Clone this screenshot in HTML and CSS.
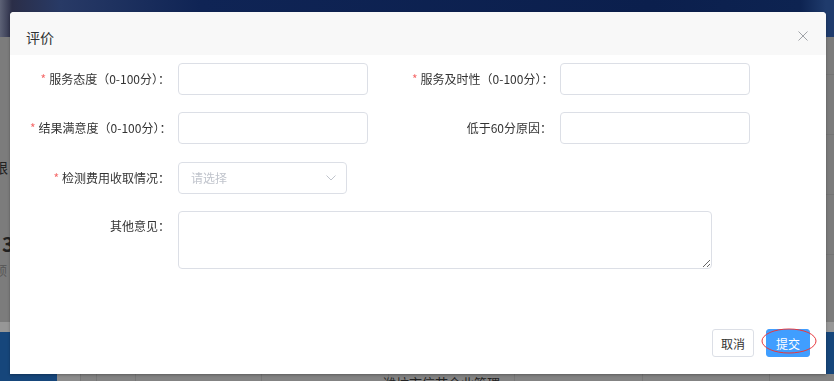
FILE: index.html
```html
<!DOCTYPE html>
<html lang="zh-CN">
<head>
    <meta charset="UTF-8">
    <meta name="viewport" content="width=device-width, initial-scale=1.0">
    <title>评价</title>
    <link rel="stylesheet" href="styles.css">
</head>
<body>
    <div class="page">
        <div class="banner"></div>
        <div class="main">
            <div class="side">
                <div class="side-label">限</div>
                <div class="side-num">3</div>
                <div class="side-hint">预</div>
            </div>
            <div class="main-rows">
                <div class="main-row"></div>
                <div class="main-row"></div>
                <div class="main-row"></div>
                <div class="main-row"></div>
            </div>
        </div>
        <div class="band"></div>
        <div class="bottom">
            <div class="bottom-nav"></div>
            <div class="table-row">
                <div class="cell c1"></div>
                <div class="cell c2"></div>
                <div class="cell c3"></div>
                <div class="cell c4"></div>
                <div class="cell c5"></div>
                <div class="cell c6">潍坊市信节企业管理</div>
                <div class="cell c7"></div>
                <div class="cell c8"></div>
                <div class="cell c9"></div>
            </div>
        </div>
    </div>

    <div class="dialog">
        <div class="dialog-header">
            <span class="dialog-title">评价</span>
            <svg class="dialog-close" width="10" height="10" viewBox="0 0 10 10">
                <path d="M0.5 0.5 L9.5 9.5 M9.5 0.5 L0.5 9.5" stroke="#a0a3a8" stroke-width="1" fill="none"/>
            </svg>
        </div>

        <form class="dialog-body" id="rateForm">
            <div class="form-item">
                <label class="form-label"><span class="req">*</span>服务态度（0-100分）：</label>
                <input class="form-input" type="text" name="attitude">
            </div>
            <div class="form-item">
                <label class="form-label"><span class="req">*</span>服务及时性（0-100分）：</label>
                <input class="form-input" type="text" name="timeliness">
            </div>

            <div class="form-item">
                <label class="form-label"><span class="req">*</span>结果满意度（0-100分）：</label>
                <input class="form-input" type="text" name="satisfaction">
            </div>
            <div class="form-item">
                <label class="form-label">低于60分原因：</label>
                <input class="form-input" type="text" name="reason">
            </div>

            <div class="form-item">
                <label class="form-label"><span class="req">*</span>检测费用收取情况：</label>
                <div class="form-select">
                    <span class="placeholder">请选择</span>
                    <svg width="10" height="6" viewBox="0 0 10 6">
                        <path d="M0.5 0.5 L5 5 L9.5 0.5" stroke="#c0c4cc" stroke-width="1" fill="none"/>
                    </svg>
                </div>
            </div>
            <div class="form-item"></div>

            <div class="form-item wide">
                <label class="form-label top">其他意见：</label>
                <textarea class="form-textarea" name="remark"></textarea>
            </div>
        </form>

        <div class="dialog-footer">
            <button type="button" class="btn">取消</button>
            <button type="button" class="btn btn-primary">提交</button>
            <svg class="mark" width="58" height="28" viewBox="0 0 58 28">
                <ellipse cx="29" cy="14" rx="27" ry="12" stroke="#e8383d" stroke-width="1" fill="none"/>
            </svg>
        </div>
    </div>
</body>
</html>
```

FILE: styles.css
```css
* {
    box-sizing: border-box;
}

html, body {
    margin: 0;
    height: 100%;
    overflow: hidden;
}

body {
    font-family: "Noto Sans CJK SC", "Liberation Sans", sans-serif;
    font-size: 12px;
    color: #333;
    background: #7c7c7c;
}

/* page behind the mask */
.page {
    display: flex;
    flex-direction: column;
    height: 381px;
}

.banner {
    height: 37px;
    background: linear-gradient(90deg, #5d6276 0, #2b2e48 12px, #283a66 60px, #0f2455 200px, #0b1f4d 650px, #0d2351 800px, #1f3b6c 826px);
}

.main {
    flex: 1;
    display: flex;
}

.side {
    width: 60px;
    margin-left: -6px;
}

.side-label {
    margin-top: 120px;
    font-size: 14px;
    color: #222;
}

.side-num {
    margin-top: 52px;
    font-size: 20px;
    font-weight: bold;
    color: #222;
    padding-left: 8px;
}

.side-hint {
    margin-top: 2px;
    font-size: 13px;
    color: #5a5a5a;
}

.main-rows {
    flex: 1;
    display: flex;
    flex-direction: column;
}

.main-row {
    height: 60px;
    border-bottom: 1px solid #747474;
}

.main-row:first-child {
    height: 38px;
}

.band {
    height: 10px;
    background: #979797;
}

.bottom {
    height: 49px;
    display: flex;
    background: #16467b;
}

.bottom-nav {
    width: 57px;
}

.table-row {
    flex: 1;
    display: flex;
    margin-top: 42px;
    background: #838383;
}

.cell {
    border-right: 1px solid #777;
    font-size: 13px;
    color: #222;
    line-height: 18px;
    white-space: nowrap;
}

.c1 { width: 24px; background: #8c8c8c; }
.c2 { width: 16px; }
.c3 { width: 39px; }
.c4 { width: 126px; }
.c5 { width: 127px; }
.c6 { width: 126px; text-indent: -6px; }
.c7 { width: 128px; }
.c8 { width: 127px; }
.c9 { flex: 1; border-right: none; }

/* dialog */
.dialog {
    position: fixed;
    top: 12px;
    left: 10px;
    width: 816px;
    height: 362px;
    background: #fff;
    border-radius: 4px 4px 0 0;
    box-shadow: 0 1px 3px rgba(0, 0, 0, 0.3);
    display: flex;
    flex-direction: column;
}

.dialog-header {
    height: 43px;
    background: #f8f8f8;
    border-radius: 4px 4px 0 0;
    padding: 17px 16px 0 16px;
    display: flex;
    justify-content: space-between;
    align-items: flex-start;
}

.dialog-title {
    font-size: 14px;
    line-height: 16px;
    color: #303133;
}

.dialog-close {
    margin-top: 2px;
    margin-right: 2px;
}

.dialog-body {
    margin: 0;
    padding: 7.5px 20px 0 20px;
    display: grid;
    grid-template-columns: 382px 382px;
    row-gap: 17.5px;
}

.form-item {
    display: flex;
    min-height: 32px;
}

.form-item.wide {
    grid-column: span 2;
}

.form-label {
    width: 148px;
    flex-shrink: 0;
    padding-right: 8px;
    text-align: right;
    line-height: 32px;
    color: #333;
    white-space: nowrap;
}

.form-label.top {
    line-height: 30px;
}

.req {
    color: #f56c6c;
    margin-right: 3px;
}

.form-input {
    width: 190px;
    height: 32px;
    border: 1px solid #dcdfe6;
    border-radius: 4px;
    padding: 0 12px;
    font: inherit;
    outline: none;
}

.form-select {
    width: 169px;
    height: 32px;
    border: 1px solid #dcdfe6;
    border-radius: 4px;
    padding: 0 10px 0 12px;
    display: flex;
    align-items: center;
    justify-content: space-between;
}

.placeholder {
    color: #c0c4cc;
}

.form-textarea {
    width: 534px;
    height: 58px;
    border: 1px solid #dcdfe6;
    border-radius: 4px;
    padding: 5px 12px;
    font: inherit;
    resize: vertical;
    outline: none;
}

.dialog-footer {
    margin-top: auto;
    padding: 0 16px 17px 16px;
    display: flex;
    justify-content: flex-end;
    gap: 12px;
    position: relative;
}

.btn {
    height: 28px;
    padding: 0 8px;
    border: 1px solid #dcdfe6;
    border-radius: 3px;
    background: #fff;
    color: #333;
    font: inherit;
    font-size: 12px;
    cursor: pointer;
}

.btn-primary {
    background: #409eff;
    border-color: #409eff;
    color: #fff;
    padding: 0 9px;
}

.mark {
    position: absolute;
    right: 8px;
    top: -2px;
}
```
